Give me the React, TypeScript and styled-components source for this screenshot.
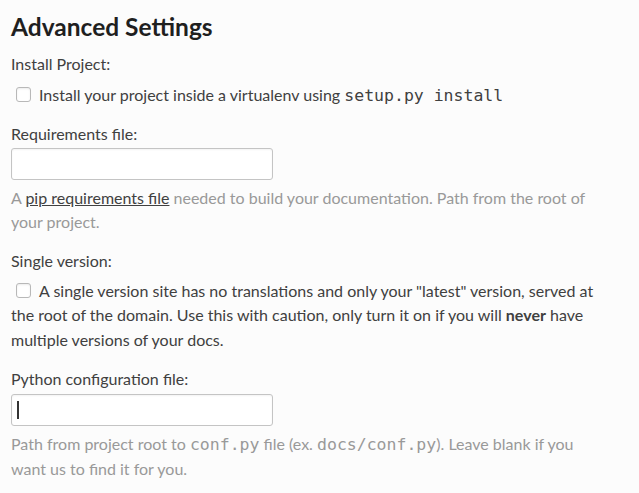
import React from "react";
import styled, { createGlobalStyle } from "styled-components";

const GlobalStyle = createGlobalStyle`
  html, body {
    margin: 0;
    padding: 0;
    background: #fcfcfc;
  }
  body {
    font-family: Lato, "Noto Sans", sans-serif;
    color: #404040;
  }
`;

const Page = styled.div`
  width: 596px;
  padding: 10px 11px 20px;
`;

const Heading = styled.h2`
  margin: 0 0 8px;
  font-size: 24.5px;
  line-height: 34px;
  font-weight: 700;
  color: #1f1f1f;
`;

const Field = styled.div<{ gap?: number }>`
  margin-bottom: ${({ gap }) => gap ?? 14}px;
`;

const Label = styled.label<{ space?: number }>`
  display: block;
  font-size: 16px;
  line-height: 24px;
  margin-bottom: ${({ space }) => space ?? 6}px;
`;

const CheckLine = styled.div`
  font-size: 16px;
  line-height: 24.5px;
`;

const Checkbox = styled.input.attrs({ type: "checkbox" })`
  appearance: none;
  width: 15px;
  height: 15px;
  margin: 0 8px 0 5px;
  border: 1px solid #b8b8b8;
  border-radius: 3px;
  background: #fff;
  box-shadow: inset 0 1px 2px rgba(0, 0, 0, 0.08);
  vertical-align: -1px;
`;

const Code = styled.code<{ muted?: boolean }>`
  font-family: "DejaVu Sans Mono", "Liberation Mono", monospace;
  font-size: 16.5px;
  color: ${({ muted }) => (muted ? "#999" : "#404040")};
`;

const InputWrap = styled.div<{ focused?: boolean }>`
  position: relative;
  width: 262px;

  &::after {
    content: "";
    display: ${({ focused }) => (focused ? "block" : "none")};
    position: absolute;
    left: 6px;
    top: 7px;
    width: 1.5px;
    height: 18px;
    background: #333;
  }
`;

const TextInput = styled.input`
  box-sizing: border-box;
  display: block;
  width: 262px;
  height: 32px;
  padding: 0 6px;
  border: 1px solid #c4c4c4;
  border-radius: 3px;
  background: #fff;
  font-family: Lato, sans-serif;
  font-size: 15px;
  color: #404040;
  outline: none;
  box-shadow: inset 0 1px 2px rgba(0, 0, 0, 0.05);
`;

const Help = styled.p`
  margin: 6px 0 0;
  font-size: 16px;
  line-height: 24px;
  color: #999;
`;

const HelpLink = styled.a`
  color: #404040;
  text-decoration: underline;
`;

export default function App() {
  return (
    <>
      <GlobalStyle />
      <Page>
        <Heading>Advanced Settings</Heading>

        <Field gap={13}>
          <Label space={7}>Install Project:</Label>
          <CheckLine>
            <Checkbox />
            Install your project inside a virtualenv using{" "}
            <Code>setup.py install</Code>
          </CheckLine>
        </Field>

        <Field gap={15}>
          <Label space={2}>Requirements file:</Label>
          <InputWrap>
            <TextInput type="text" />
          </InputWrap>
          <Help>
            A <HelpLink href="#">pip requirements file</HelpLink> needed to
            build your documentation. Path from the root of your project.
          </Help>
        </Field>

        <Field gap={15}>
          <Label space={6}>Single version:</Label>
          <CheckLine>
            <Checkbox />
            A single version site has no translations and only your "latest"
            version, served at the root of the domain. Use this with caution,
            only turn it on if you will <b>never</b> have multiple versions of
            your docs.
          </CheckLine>
        </Field>

        <Field>
          <Label space={3}>Python configuration file:</Label>
          <InputWrap focused>
            <TextInput type="text" />
          </InputWrap>
          <Help>
            Path from project root to <Code muted>conf.py</Code> file (ex.{" "}
            <Code muted>docs/conf.py</Code>). Leave blank if you want us to
            find it for you.
          </Help>
        </Field>
      </Page>
    </>
  );
}
